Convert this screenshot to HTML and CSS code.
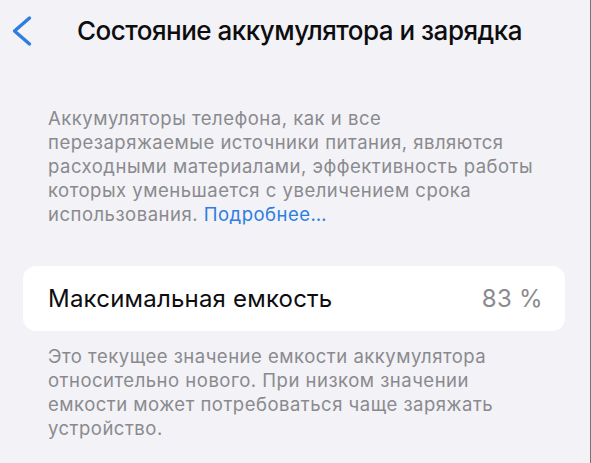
FILE: index.html
```html
<!DOCTYPE html>
<html lang="ru">
<head>
<meta charset="utf-8">
<title>Состояние аккумулятора и зарядка</title>
<link rel="stylesheet" href="styles.css">
</head>
<body>
<div class="screen">
  <header class="nav">
    <button class="back" aria-label="Назад">
      <svg width="24" height="32" viewBox="0 0 24 32"><path d="M19.5 3 L4.5 16 L19.5 29" fill="none" stroke="#2f7de1" stroke-width="3.4" stroke-linecap="round" stroke-linejoin="round"/></svg>
    </button>
    <h1 class="title">Состояние аккумулятора и зарядка</h1>
  </header>

  <p class="note intro">Аккумуляторы телефона, как и все<br>перезаряжаемые источники питания, являются<br>расходными материалами, эффективность работы<br>которых уменьшается с увеличением срока<br>использования. <a class="link" href="#">Подробнее…</a></p>

  <div class="card">
    <span class="label">Максимальная емкость</span>
    <span class="value">83 %</span>
  </div>

  <p class="note footer">Это текущее значение емкости аккумулятора<br>относительно нового. При низком значении<br>емкости может потребоваться чаще заряжать<br>устройство.</p>
</div>
</body>
</html>
```
FILE: styles.css
```css
html, body {
  margin: 0;
  padding: 0;
  background: #f2f2f7;
}

body {
  font-family: Inter, "Noto Sans", sans-serif;
  -webkit-font-smoothing: antialiased;
}

.screen {
  width: 590px;
  height: 463px;
  border-right: 1px solid #747478;
  overflow: hidden;
}

/* navigation bar: back chevron + screen title */
.nav {
  display: flex;
  align-items: center;
  height: 62px;
  padding-left: 10px;
}

.back {
  display: flex;
  border: 0;
  padding: 0;
  background: none;
  width: 24px;
  height: 32px;
}

.title {
  margin: 0 0 0 43px;
  font-size: 26px;
  line-height: 32px;
  font-weight: 500;
  color: #0d0d0f;
  letter-spacing: -0.5px;
}

/* grouped-table header / footer notes */
.note {
  margin: 0;
  padding: 0 20px 0 48px;
  font-size: 18.5px;
  line-height: 24px;
  letter-spacing: 0.5px;
  color: #8a8a8e;
}

.intro {
  margin-top: 44px;
}

.link {
  color: #2f7de1;
  text-decoration: none;
}

.card {
  display: flex;
  justify-content: space-between;
  align-items: center;
  margin: 40px 25px 0 23px;
  height: 65px;
  padding: 0 22px 0 25px;
  background: #fff;
  border-radius: 13px;
}

.label {
  font-size: 24px;
  letter-spacing: 0.2px;
  color: #0d0d0f;
}

.value {
  font-size: 24px;
  letter-spacing: 0.3px;
  color: #8a8a8e;
}

.footer {
  margin-top: 13px;
}
```
